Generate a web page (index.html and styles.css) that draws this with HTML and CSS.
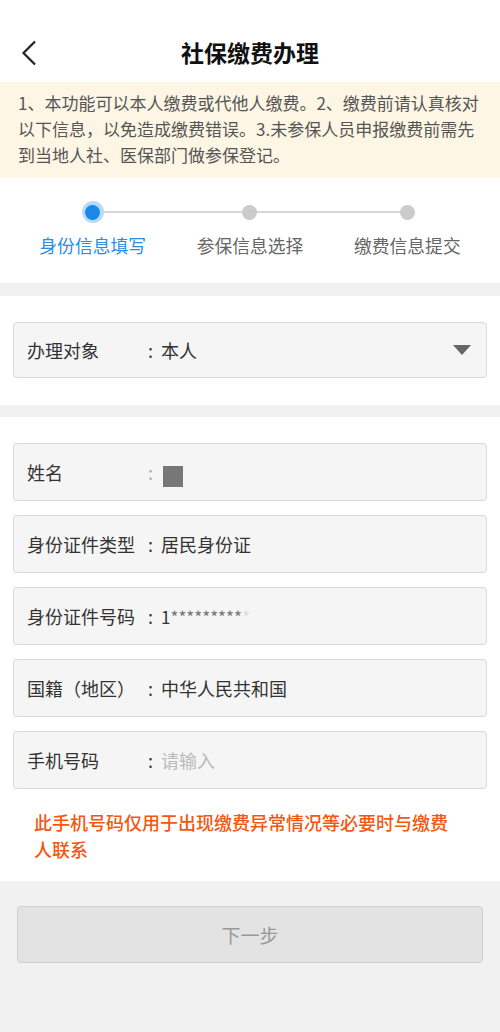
FILE: index.html
```html
<!DOCTYPE html>
<html lang="zh-CN">
  <head>
    <meta charset="utf-8" />
    <title>社保缴费办理</title>
    <link rel="stylesheet" href="styles.css">
  </head>
  <body>
    <div class="page">
      <div class="nav">
        <svg class="back" width="16" height="26" viewBox="0 0 16 26">
          <polyline points="14,1.5 2.5,13 14,24.5" fill="none" stroke="#222" stroke-width="2.2" />
        </svg>
        <div class="title">社保缴费办理</div>
        <div></div>
      </div>

      <div class="notice">
        1、本功能可以本人缴费或代他人缴费。2、缴费前请认真核对以下信息，以免造成缴费错误。3.未参保人员申报缴费前需先到当地人社、医保部门做参保登记。
      </div>

      <div class="steps">
        <div class="step active">
          <span class="dot"></span>
          <span class="step-label">身份信息填写</span>
        </div>
        <div class="step">
          <span class="dot"></span>
          <span class="step-label">参保信息选择</span>
        </div>
        <div class="step">
          <span class="dot"></span>
          <span class="step-label">缴费信息提交</span>
        </div>
      </div>

      <div class="section select-section">
        <div class="field">
          <span class="label">办理对象</span>
          <span class="colon">:</span>
          <span class="value">本人</span>
          <span class="arrow"></span>
        </div>
      </div>

      <div class="section form-section">
        <div class="field">
          <span class="label">姓名</span>
          <span class="colon light">:</span>
          <span class="value"><span class="masked"></span></span>
        </div>
        <div class="field">
          <span class="label">身份证件类型</span>
          <span class="colon">:</span>
          <span class="value">居民身份证</span>
        </div>
        <div class="field">
          <span class="label">身份证件号码</span>
          <span class="colon">:</span>
          <span class="value id-num">1<span class="stars">*********</span><span class="fade">*</span></span>
        </div>
        <div class="field">
          <span class="label">国籍（地区）</span>
          <span class="colon">:</span>
          <span class="value">中华人民共和国</span>
        </div>
        <div class="field">
          <span class="label">手机号码</span>
          <span class="colon">:</span>
          <span class="value placeholder">请输入</span>
        </div>
        <p class="tip">此手机号码仅用于出现缴费异常情况等必要时与缴费人联系</p>
      </div>

      <div class="footer">
        <button type="button" class="next">下一步</button>
      </div>
    </div>
  </body>
</html>
```

FILE: styles.css
```css
body {
  margin: 0;
  background-color: #f1f1f1;
  font-family: "Noto Sans CJK SC", "Noto Sans", sans-serif;
}
.page {
  width: 500px;
  min-height: 1032px;
  background-color: #f1f1f1;
}

/* top bar */
.nav {
  height: 60px;
  padding-top: 22px;
  background: #fff;
  display: grid;
  grid-template-columns: 60px 1fr 60px;
  align-items: center;
}
.back {
  margin-left: 21px;
  margin-top: 2px;
}
.title {
  text-align: center;
  font-size: 23px;
  font-weight: 700;
  color: #111;
}

.notice {
  background: #fdf6e5;
  padding: 8px 14px 10px 18px;
  font-size: 17px;
  line-height: 26px;
  color: #555;
}

/* stepper */
.steps {
  position: relative;
  background: #fff;
  display: grid;
  grid-template-columns: repeat(3, 1fr);
  padding: 23px 14px 26px;
  margin-bottom: 13px;
}
.steps::before {
  content: "";
  position: absolute;
  left: 93px;
  right: 94px;
  top: 33px;
  height: 2px;
  background: #d6d6d6;
}
.step {
  position: relative;
  display: flex;
  flex-direction: column;
  align-items: center;
  gap: 10px;
}
.dot {
  width: 22px;
  height: 22px;
  display: flex;
  align-items: center;
  justify-content: center;
}
.dot::after {
  content: "";
  width: 15px;
  height: 15px;
  border-radius: 50%;
  background: #cbcbcb;
}
.step.active .dot {
  border-radius: 50%;
  background: #b6dbf7;
}
.step.active .dot::after {
  background: #1b87e6;
}
.step-label {
  font-size: 17.8px;
  line-height: 24px;
  color: #666;
}
.step.active .step-label {
  color: #2a8de2;
}

/* sections */
.section {
  background: #fff;
  padding: 26px 13px;
  display: flex;
  flex-direction: column;
  gap: 14px;
}
.select-section {
  padding-bottom: 27px;
  margin-bottom: 12px;
}
.select-section .field {
  height: 56px;
}
.field {
  height: 58px;
  box-sizing: border-box;
  background: #f5f5f5;
  border: 1px solid #d9d9d9;
  border-radius: 4px;
  display: flex;
  align-items: center;
  padding: 0 14px 0 13px;
  font-size: 18px;
  color: #333;
}
.label {
  width: 114px;
  white-space: nowrap;
}
.colon {
  width: 19px;
  text-align: center;
}
.colon.light {
  color: #aaa;
}
.value {
  flex: 1;
  margin-left: 1px;
}
.masked {
  display: inline-block;
  width: 20px;
  height: 21px;
  margin-left: 2px;
  margin-top: 6px;
  background: #777;
  vertical-align: middle;
}
.id-num {
  font-size: 17px;
}
.stars {
  color: #777;
}
.fade {
  color: #ddd;
}
.placeholder {
  color: #bbb;
}
.arrow {
  width: 0;
  height: 0;
  border-left: 9px solid transparent;
  border-right: 9px solid transparent;
  border-top: 10px solid #666;
  margin-right: 1px;
}
.form-section {
  padding-bottom: 18px;
}
.tip {
  margin: 6px 0 0;
  padding: 0 30px 0 21px;
  font-size: 18px;
  line-height: 27px;
  font-weight: 500;
  color: #f4570f;
}

.footer {
  padding: 25px 17px;
}
.next {
  width: 100%;
  height: 57px;
  background: #e3e3e3;
  border: 1px solid #cfcfcf;
  border-radius: 4px;
  font-family: inherit;
  font-size: 19px;
  color: #999;
}
```
